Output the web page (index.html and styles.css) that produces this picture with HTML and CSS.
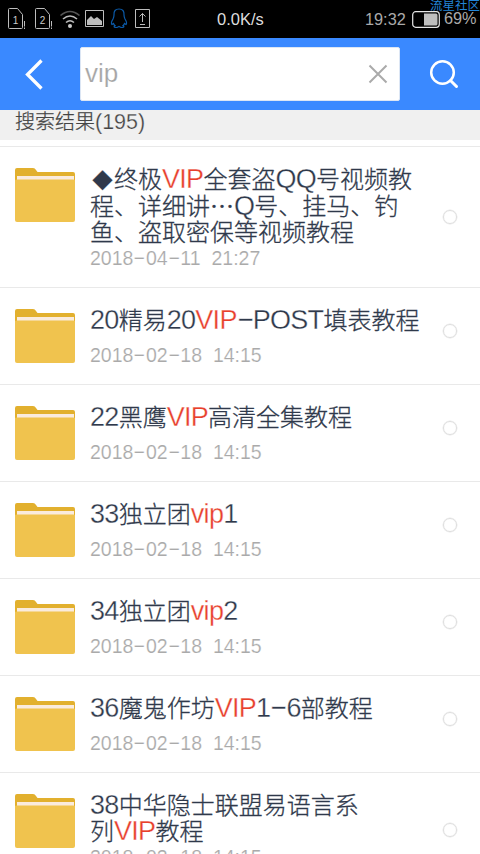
FILE: index.html
```
<!DOCTYPE html>
<html lang="zh-CN">
<head>
<meta charset="utf-8">
<title>搜索结果</title>
<link rel="stylesheet" href="styles.css">
</head>
<body>
<svg class="defs" width="0" height="0">
  <symbol id="folder" viewBox="0 0 60 54">
    <path d="M0 12V2Q0 0 2 0H18Q20 0 21 2L22.500 4H58Q60 4 60 6V12Z" fill="#e2b02e"/>
    <path d="M2 8H59V13H2Z" fill="#faebdd"/>
    <path d="M0 12Q0 11.500 2 11.500H58Q60 11.500 60 12V52Q60 54 58 54H2Q0 54 0 52Z" fill="#f0c34e"/>
  </symbol>
</svg>
<header class="status">
  <div class="icons">
    <svg width="152" height="38" viewBox="0 0 152 38" fill="none" stroke="#bdbdbd" stroke-width="1">
      <path d="M8.500 9.500Q8.500 8.500 9.500 8.500H17.500L22.500 14.500V27.500Q22.500 28.500 21.500 28.500H9.500Q8.500 28.500 8.500 27.500ZM24.500 21V26.500M24.500 27.500V29"/>
      <path d="M35.500 9.500Q35.500 8.500 36.500 8.500H44.500L49.500 14.500V27.500Q49.500 28.500 48.500 28.500H36.500Q35.500 28.500 35.500 27.500ZM51.500 21V26.500M51.500 27.500V29"/>
      <text x="12.800" y="23.500">1</text><text x="39.800" y="23.500">2</text>
      <path d="M60.500 15.500Q70 7.500 79.500 15.500" stroke="#555" stroke-width="1.600"/>
      <path d="M63 19Q70 13 77 19M66 22.500Q70 19 74 22.500" stroke-width="1.600"/>
      <circle cx="70" cy="26" r="2" fill="#ccc" stroke="none"/>
      <path d="M85.500 10.500H103.500V26.500H85.500Z"/>
      <path d="M87 25V20L91 16L94 19L97 17L102 21V25Z" fill="#bdbdbd" stroke="none"/>
      <path d="M114 15Q113.500 9 119 9Q124.500 9 124 15Q124 17 125 19Q127.500 23 126 24.500L124.500 23.500Q124 25 123 25.500Q125.500 27.500 121 27.500L119 26.500L117 27.500Q112.500 27.500 115 25.500Q114 25 113.500 23.500L112 24.500Q110.500 23 113 19Q114 17 114 15Z" stroke="#0b5aa8" stroke-width="1.200"/>
      <path d="M135.500 9.500H149.500V27.500H135.500ZM142.500 22V13.500M139.500 16.500L142.500 13.500L145.500 16.500M140 24.500H145"/>
    </svg>
  </div>
  <div class="speed">0.0K/s</div>
  <div class="right">
    <span class="time">19:32</span>
    <svg width="28" height="17" viewBox="0 0 28 17"><rect x=".7" y=".7" width="26.600" height="15.600" rx="3" fill="none" stroke="#e6e6e6" stroke-width="1.200"/><path d="M12 2.500H24Q25.500 2.500 25.500 4V13Q25.500 14.500 24 14.500H12Z" fill="#bfbfbf"/></svg>
    <span class="pct">69%</span>
  </div>
  <div class="mark">流星社区</div>
</header>
<nav class="bar">
  <svg class="back" width="80" height="72" viewBox="0 0 80 72"><path d="M41.500 22.500L27.500 36.500L41.500 50.500" fill="none" stroke="#fff" stroke-width="3.300"/></svg>
  <div class="field"><span>vip</span>
    <svg width="20" height="20" viewBox="0 0 20 20"><path d="M1.500 1.500L18.500 18.500M18.500 1.500L1.500 18.500" stroke="#aaa" stroke-width="2"/></svg>
  </div>
  <svg width="80" height="72" viewBox="0 0 80 72" fill="none" stroke="#fff"><circle cx="42.500" cy="34.500" r="11.300" stroke-width="2.500"/><path d="M50.500 42.500L56.500 48.500" stroke-width="3" stroke-linecap="round"/></svg>
</nav>
<div class="summary">搜索结果<span>(195)</span></div>
<main>
  <article class="item">
    <svg class="folder"><use href="#folder"/></svg>
    <div class="body">
      <h2><span class="line"><i class="dia">◆</i>终极<b>VIP</b>全套盗<i>QQ</i>号视频教</span><span class="line">程、详细讲<i class="dots">…</i><i>Q</i>号、挂马、钓</span><span class="line">鱼、盗取密保等视频教程</span></h2>
      <p>2018<s>-</s>04<s>-</s>11 21:27</p>
    </div>
    <span class="radio three"></span>
  </article>
  <article class="item">
    <svg class="folder"><use href="#folder"/></svg>
    <div class="body">
      <h2><span class="line"><i>20</i>精易<i>20</i><b>VIP</b><s>-</s><i>POST</i>填表教程</span></h2>
      <p>2018<s>-</s>02<s>-</s>18 14:15</p>
    </div>
    <span class="radio"></span>
  </article>
  <article class="item">
    <svg class="folder"><use href="#folder"/></svg>
    <div class="body">
      <h2><span class="line"><i>22</i>黑鹰<b>VIP</b>高清全集教程</span></h2>
      <p>2018<s>-</s>02<s>-</s>18 14:15</p>
    </div>
    <span class="radio"></span>
  </article>
  <article class="item">
    <svg class="folder"><use href="#folder"/></svg>
    <div class="body">
      <h2><span class="line"><i>33</i>独立团<b class="low">vip</b><i>1</i></span></h2>
      <p>2018<s>-</s>02<s>-</s>18 14:15</p>
    </div>
    <span class="radio"></span>
  </article>
  <article class="item">
    <svg class="folder"><use href="#folder"/></svg>
    <div class="body">
      <h2><span class="line"><i>34</i>独立团<b class="low">vip</b><i>2</i></span></h2>
      <p>2018<s>-</s>02<s>-</s>18 14:15</p>
    </div>
    <span class="radio"></span>
  </article>
  <article class="item">
    <svg class="folder"><use href="#folder"/></svg>
    <div class="body">
      <h2><span class="line"><i>36</i>魔鬼作坊<b>VIP</b><i>1</i><s>-</s><i>6</i>部教程</span></h2>
      <p>2018<s>-</s>02<s>-</s>18 14:15</p>
    </div>
    <span class="radio"></span>
  </article>
  <article class="item">
    <svg class="folder"><use href="#folder"/></svg>
    <div class="body">
      <h2><span class="line"><i>38</i>中华隐士联盟易语言系</span><span class="line">列<b>VIP</b>教程</span></h2>
      <p>2018<s>-</s>02<s>-</s>18 14:15</p>
    </div>
    <span class="radio two"></span>
  </article>
</main>
</body>
</html>
```
FILE: styles.css
```
* { box-sizing: border-box; margin: 0; padding: 0; }
body {
  width: 480px; height: 854px; overflow: hidden; background: #fff;
  display: flex; flex-direction: column;
  font-family: "Liberation Sans", "Noto Sans CJK SC", sans-serif;
}
svg { display: block; flex: none; }
.defs { position: absolute; }
.status {
  height: 38px; flex: none; background: #000; color: #aaa; position: relative;
  display: grid; grid-template-columns: 217px 148px 1fr; align-items: center; font-size: 17px;
}
.icons text { font-size: 10px; fill: #ccc; stroke: none; }
.speed { color: #ddd; font-size: 16.5px; }
.right { display: flex; align-items: center; white-space: nowrap; }
.time { width: 47px; font-size: 16.3px; }
.pct { font-size: 16.3px; margin-left: 4px; margin-top: -1px; }
.mark {
  position: absolute; right: 0; top: 0; color: #2385d8; font-size: 12.500px;
  line-height: 13px; font-weight: 400; white-space: nowrap;
}
.bar { height: 72px; flex: none; background: #3a89ff; display: flex; align-items: center; }
.field {
  width: 320px; height: 54px; background: #fff; border: 1px solid #dce6f4; border-radius: 2px;
  display: flex; align-items: center; justify-content: space-between; padding: 0 11px 0 4px;
  color: #a5a5a5; font-size: 26px; -webkit-text-stroke: .2px #fff;
}
.field span { margin-top: -1px; }
.summary {
  height: 30px; flex: none; background: #f0f0f0; color: #444; padding-left: 15px;
  font: 300 20px/21px "Noto Sans CJK SC", sans-serif; -webkit-text-stroke: .25px #444;
}
.summary span { font: 21.500px/21px "Liberation Sans", sans-serif; -webkit-text-stroke: .25px #f0f0f0; }
main { border-top: 1px solid #e9e9e9; margin-top: 6px; flex: none; }
.item { display: flex; padding: 21px 0 0 15px; border-bottom: 1px solid #e9e9e9; }
.folder { width: 60px; height: 54px; }
.body { width: 340px; margin-left: 15px; margin-top: -3px; padding-bottom: 17px; }
h2 {
  min-height: 36px; color: #2f394b; font-weight: 300; font-size: 24px; line-height: 26.500px;
  font-family: "Noto Sans CJK SC", sans-serif; margin-bottom: 1px; -webkit-text-stroke: .28px #2f394b;
}
.line { display: block; height: 26.500px; white-space: nowrap; }
h2 i, h2 b, h2 s {
  font: normal 400 27px/26px "Liberation Sans", sans-serif; letter-spacing: -.7px;
  -webkit-text-stroke: .3px #fff;
}
h2 b { color: #e8402c; }
h2 .low { letter-spacing: -.6px; }
h2 .dia { display: inline-block; width: 24px; font-size: 21px; text-align: center; }
h2 .dots { display: inline-block; width: 24px; font: 300 24px/26px "Noto Sans CJK SC", sans-serif; -webkit-text-stroke: .6px #2f394b; }
s {
  display: inline-block; width: 16px; text-align: center; text-decoration: none;
  transform: translateY(-2px) scaleX(2.100);
}
p { color: #aaa; font-size: 19.500px; line-height: 24px; height: 24px; word-spacing: 5.500px; white-space: nowrap; -webkit-text-stroke: .18px #fff; }
p s { width: 12.600px; transform: translateY(-1px) scaleX(2); }
.radio { width: 14px; height: 14px; border: 1.800px solid #dedede; border-radius: 50%; margin: 15px 0 0 13px; box-shadow: 0 0 0 .5px #e8e8e8; }
.radio.two { margin-top: 29px; }
.radio.three { margin-top: 42px; }
```
